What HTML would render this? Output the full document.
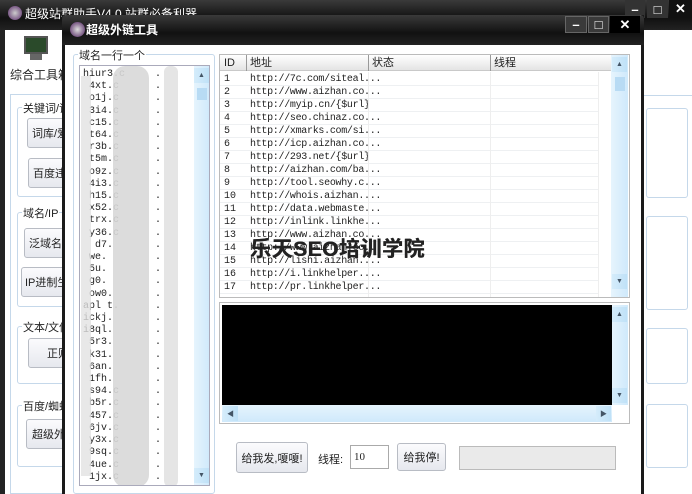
<!DOCTYPE html>
<html><head><meta charset="utf-8"><style>
*{margin:0;padding:0;box-sizing:border-box}
body{width:692px;height:494px;overflow:hidden;position:relative;background:#fff;font-family:"Liberation Sans","Noto Sans CJK SC",sans-serif;font-size:11px;color:#222}
.a{position:absolute}
.tb{background:linear-gradient(#3a3a3a,#111 60%,#222)}
.btn{position:absolute;border:1px solid #b8bcc4;border-radius:3px;background:linear-gradient(#fbfbfd,#e6e8ee);font-size:11px;display:flex;align-items:center;justify-content:center;white-space:nowrap;overflow:hidden}
.grp{position:absolute;border:1px solid #c5d8ea;border-radius:3px}
.lg{position:absolute;background:#fff;padding:0 1px;font-size:11px;top:-8px;left:4px;white-space:nowrap}
.sb{position:absolute;background:linear-gradient(90deg,#e6f4fd,#cfe9fb);}
.arr{position:absolute;width:15px;height:15px;background:linear-gradient(90deg,#d5ecfb,#bfe1f7);font-size:7px;color:#456;display:flex;align-items:center;justify-content:center}
.row{position:absolute;left:0;width:378px;height:13px;font-family:"Liberation Mono","Noto Sans CJK SC",monospace;font-size:10px;line-height:13px;border-bottom:1px solid #eef0f2}
.row b{position:absolute;left:4px;font-weight:normal}
.row i{position:absolute;left:30px;font-style:normal;letter-spacing:-0.3px}
.wb{position:absolute;font-size:13px;color:#fff;font-weight:bold;display:flex;align-items:center;justify-content:center}
</style></head><body>
<div class="a tb" style="left:0;top:0;width:692px;height:30px"></div>
<div class="a" style="left:8px;top:6px;width:14px;height:14px;border-radius:50%;background:radial-gradient(#ccc,#5a2a6a)"></div>
<div class="a" style="left:25px;top:5px;color:#fff;font-size:12px">超级站群助手V4.0 站群必备利器</div>
<div class="a" style="left:0;top:30px;width:5px;height:464px;background:#222"></div>
<div class="wb" style="left:625px;top:0;width:20px;height:18px;background:#333">–</div>
<div class="wb" style="left:647px;top:0;width:21px;height:18px;background:#333">□</div>
<div class="wb" style="left:669px;top:0;width:23px;height:18px;background:#111">✕</div>
<div class="a" style="left:24px;top:36px;width:24px;height:18px;background:#2a4a2a;border:2px solid #555"></div>
<div class="a" style="left:30px;top:54px;width:12px;height:6px;background:#666"></div>
<div class="a" style="left:10px;top:66px;font-size:12px">综合工具箱</div>
<div class="a" style="left:10px;top:94px;width:60px;height:400px;border:1px solid #c5d8ea"></div>
<div class="grp" style="left:17px;top:107px;width:60px;height:90px"><span class="lg">关键词/词</span></div>
<div class="btn" style="left:27px;top:118px;width:50px;height:30px;justify-content:flex-start;padding-left:4px">词库/爱</div>
<div class="btn" style="left:28px;top:158px;width:50px;height:30px;justify-content:flex-start;padding-left:4px">百度违</div>
<div class="grp" style="left:17px;top:212px;width:60px;height:95px"><span class="lg">域名/IP</span></div>
<div class="btn" style="left:24px;top:228px;width:50px;height:30px;justify-content:flex-start;padding-left:4px">泛域名</div>
<div class="btn" style="left:21px;top:267px;width:50px;height:30px;justify-content:flex-start;padding-left:3px">IP进制生</div>
<div class="grp" style="left:17px;top:326px;width:60px;height:58px"><span class="lg">文本/文件</span></div>
<div class="btn" style="left:28px;top:338px;width:50px;height:30px;justify-content:flex-start;padding-left:18px">正则</div>
<div class="grp" style="left:17px;top:405px;width:60px;height:62px"><span class="lg">百度/蜘蛛</span></div>
<div class="btn" style="left:26px;top:419px;width:50px;height:30px;justify-content:flex-start;padding-left:5px">超级外链</div>
<div class="a" style="left:643px;top:95px;width:49px;height:1px;background:#c5d8ea"></div>
<div class="grp" style="left:646px;top:108px;width:42px;height:90px"></div>
<div class="grp" style="left:646px;top:216px;width:42px;height:94px"></div>
<div class="grp" style="left:646px;top:328px;width:42px;height:56px"></div>
<div class="grp" style="left:646px;top:404px;width:42px;height:64px"></div>
<div class="a" style="left:62px;top:15px;width:582px;height:479px;background:#fff;border-left:3px solid #1a1a1a;border-right:3px solid #1a1a1a"></div>
<div class="a tb" style="left:62px;top:15px;width:582px;height:30px;border-radius:4px 4px 0 0"></div>
<div class="a" style="left:70px;top:22px;width:15px;height:15px;border-radius:50%;background:radial-gradient(#ddd,#4a1a5a)"></div>
<div class="a" style="left:86px;top:21px;color:#fff;font-size:12px;font-weight:bold">超级外链工具</div>
<div class="wb" style="left:565px;top:16px;width:22px;height:17px;background:#3a3a3a;border:1px solid #666">–</div>
<div class="wb" style="left:588px;top:16px;width:21px;height:17px;background:#3a3a3a;border:1px solid #666">□</div>
<div class="wb" style="left:610px;top:16px;width:30px;height:17px;background:#000">✕</div>
<div class="grp" style="left:73px;top:54px;width:142px;height:440px"><span class="lg">域名一行一个</span></div>
<div class="a" style="left:79px;top:65px;width:131px;height:421px;border:1px solid #aab;background:#fff;overflow:hidden">
<div style="font-family:'Liberation Mono',monospace;font-size:10px;line-height:12.2px;padding:3px 0 0 3px;white-space:pre">hiur3.c     .
 4xt.c      .
 o1j.c      .
 3i4.c      .
 c15.c      .
 t64.c      .
 r3b.c      .
 t5m.c      .
 o9z.c      .
 4i3.c      .
 h15.c      .
 x52.c      .
 trx.c      .
 y36.c      .
  d7.       .
 we.        .
 5u.        .
 g0.        .
 ow0.       .
apl t.      .
ickj.       .
i8ql.       .
 5r3.       .
 k31.       .
 6an.       .
 1fh.       .
 s94.c      .
 b5r.c      .
 457.c      .
 6jv.c      .
 y3x.c      .
 9sq.c      .
 4ue.c      .
 1jx.c      .</div>
<div class="a" style="left:33px;top:0;width:36px;height:421px;background:#d8d8d8;opacity:.9;border-radius:12px"></div>
<div class="a" style="left:1px;top:10px;width:10px;height:400px;background:#e2e2e2;opacity:.8"></div>
<div class="a" style="left:84px;top:0;width:14px;height:421px;background:#e0e0e0;opacity:.85;border-radius:6px"></div>
<div class="sb" style="left:114px;top:0;width:16px;height:421px"></div>
<div class="arr" style="left:114px;top:2px">▲</div>
<div class="a" style="left:117px;top:22px;width:10px;height:12px;background:#b8dbf4"></div>
<div class="arr" style="left:114px;top:402px">▼</div>
</div>
<div class="a" style="left:219px;top:54px;width:411px;height:244px;border:1px solid #bbb;overflow:hidden;background:#fff">
<div class="a" style="left:0;top:0;width:391px;height:16px;background:linear-gradient(#fff,#e4e4e4);border-bottom:1px solid #c9c9c9;font-size:11px;line-height:16px">
<span class="a" style="left:4px">ID</span><span class="a" style="left:26px;border-left:1px solid #999;padding-left:3px">地址</span><span class="a" style="left:148px;border-left:1px solid #999;padding-left:3px">状态</span><span class="a" style="left:270px;border-left:1px solid #999;padding-left:3px">线程</span></div>
<div class="a" style="left:0;top:17px;width:391px;height:227px">
<div class="row" style="top:1px"><b>1</b><i>http://7c.com/siteal...</i></div>
<div class="row" style="top:14px"><b>2</b><i>http://www.aizhan.co...</i></div>
<div class="row" style="top:27px"><b>3</b><i>http://myip.cn/{$url}</i></div>
<div class="row" style="top:40px"><b>4</b><i>http://seo.chinaz.co...</i></div>
<div class="row" style="top:53px"><b>5</b><i>http://xmarks.com/si...</i></div>
<div class="row" style="top:66px"><b>6</b><i>http://icp.aizhan.co...</i></div>
<div class="row" style="top:79px"><b>7</b><i>http://293.net/{$url}</i></div>
<div class="row" style="top:92px"><b>8</b><i>http://aizhan.com/ba...</i></div>
<div class="row" style="top:105px"><b>9</b><i>http://tool.seowhy.c...</i></div>
<div class="row" style="top:118px"><b>10</b><i>http://whois.aizhan....</i></div>
<div class="row" style="top:131px"><b>11</b><i>http://data.webmaste...</i></div>
<div class="row" style="top:144px"><b>12</b><i>http://inlink.linkhe...</i></div>
<div class="row" style="top:157px"><b>13</b><i>http://www.aizhan.co...</i></div>
<div class="row" style="top:170px"><b>14</b><i>http://www.aizhan.co...</i></div>
<div class="row" style="top:183px"><b>15</b><i>http://lishi.aizhan....</i></div>
<div class="row" style="top:196px"><b>16</b><i>http://i.linkhelper....</i></div>
<div class="row" style="top:209px"><b>17</b><i>http://pr.linkhelper...</i></div>
<div class="a" style="left:148px;top:0;width:1px;height:227px;background:#eee"></div>
<div class="a" style="left:270px;top:0;width:1px;height:227px;background:#eee"></div>
<div class="a" style="left:378px;top:0;width:1px;height:227px;background:#eee"></div>
</div>
<div class="sb" style="left:391px;top:0;width:17px;height:242px"></div>
<div class="arr" style="left:392px;top:2px">▲</div>
<div class="a" style="left:395px;top:22px;width:10px;height:14px;background:#b8dbf4"></div>
<div class="arr" style="left:392px;top:219px">▼</div>
</div>
<div class="a" style="left:250px;top:233px;font-size:21px;font-weight:bold;color:#222;letter-spacing:0.5px;text-shadow:0.5px 0 0 #222">乐天SEO培训学院</div>
<div class="a" style="left:219px;top:302px;width:411px;height:122px;border:1px solid #bbb;background:#fff">
<div class="a" style="left:2px;top:2px;width:390px;height:100px;background:#000"></div>
<div class="sb" style="left:392px;top:2px;width:16px;height:100px"></div>
<div class="arr" style="left:392px;top:4px">▲</div>
<div class="arr" style="left:392px;top:85px">▼</div>
<div class="sb" style="left:2px;top:102px;width:390px;height:17px;background:linear-gradient(#e6f4fd,#cfe9fb)"></div>
<div class="arr" style="left:3px;top:103px">◀</div>
<div class="arr" style="left:376px;top:103px">▶</div>
</div>
<div class="btn" style="left:236px;top:442px;width:72px;height:31px">给我发,嗄嗄!</div>
<div class="a" style="left:318px;top:451px;font-size:11px">线程:</div>
<div class="a" style="left:350px;top:445px;width:39px;height:24px;border:1px solid #aaa;font-family:'Liberation Serif',serif;font-size:11px;padding:5px 0 0 3px">10</div>
<div class="btn" style="left:397px;top:443px;width:49px;height:28px">给我停!</div>
<div class="a" style="left:459px;top:446px;width:157px;height:24px;border:1px solid #bbb;background:#eaeaea"></div>
</body></html>
